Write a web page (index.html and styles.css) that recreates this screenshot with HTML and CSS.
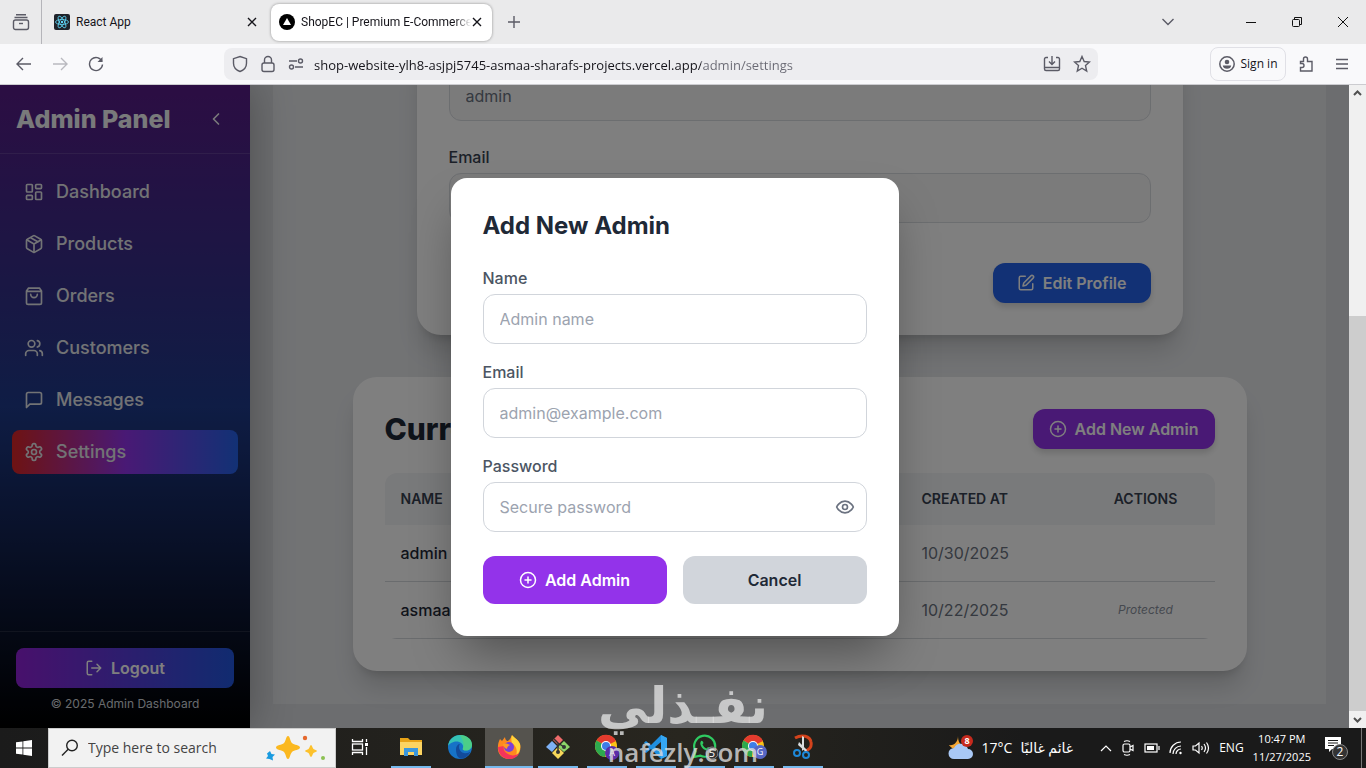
FILE: index.html
```
<!DOCTYPE html>
<html lang="en">
<head>
  <meta charset="UTF-8">
  <meta name="viewport" content="width=device-width, initial-scale=1.0">
  <title>ShopEC | Premium E-Commerce</title>
  <link rel="stylesheet" href="styles.css">
</head>
<body>

  <!-- Tab strip -->
  <header class="tabstrip">
    <button class="tab-list" aria-label="Recent browsing">
      <svg class="line" width="18" height="18" viewBox="0 0 18 18"><path d="M4 1.700h10M2.500 4.500h13"/><rect x="1.500" y="7" width="15" height="9.500" rx="2"/><path d="M7 10.500h4"/></svg>
    </button>
    <div class="tab">
      <svg width="16" height="16" viewBox="0 0 16 16"><rect width="16" height="16" rx="2" fill="#20232a"/><g fill="none" stroke="#61dafb" stroke-width=".8"><ellipse cx="8" cy="8" rx="6.500" ry="2.500"/><ellipse cx="8" cy="8" rx="6.500" ry="2.500" transform="rotate(60 8 8)"/><ellipse cx="8" cy="8" rx="6.500" ry="2.500" transform="rotate(120 8 8)"/></g><circle cx="8" cy="8" r="1.200" fill="#61dafb"/></svg>
      <span class="tab-title">React App</span>
      <button class="tab-close" aria-label="Close tab"><svg class="line dark" width="10" height="10" viewBox="0 0 10 10"><path d="M1 1l8 8M9 1l-8 8"/></svg></button>
    </div>
    <div class="tab tab-active">
      <svg width="16" height="16" viewBox="0 0 16 16"><circle cx="8" cy="8" r="8" fill="#000"/><path d="M8 4l4 7H4z" fill="#fff"/></svg>
      <span class="tab-title">ShopEC | Premium E-Commerce</span>
      <button class="tab-close" aria-label="Close tab"><svg class="line dark" width="10" height="10" viewBox="0 0 10 10"><path d="M1 1l8 8M9 1l-8 8"/></svg></button>
    </div>
    <button class="tab-new" aria-label="New tab"><svg class="line" width="12" height="12" viewBox="0 0 12 12"><path d="M6 0v12M0 6h12"/></svg></button>
    <div class="window-controls">
      <button class="all-tabs" aria-label="List all tabs"><svg class="line" width="12" height="8" viewBox="0 0 12 8"><path d="M.5 1L6 6.500 11.500 1"/></svg></button>
      <button aria-label="Minimize"><svg class="thin" width="10" height="10" viewBox="0 0 10 10"><path d="M0 5.500h10"/></svg></button>
      <button aria-label="Restore"><svg class="thin" width="10" height="10" viewBox="0 0 10 10"><rect x=".5" y="2.500" width="7" height="7" rx="1"/><path d="M2.500 2.500v-2h7v7h-2"/></svg></button>
      <button aria-label="Close"><svg class="thin" width="10" height="10" viewBox="0 0 10 10"><path d="M0 0l10 10M10 0L0 10"/></svg></button>
    </div>
  </header>

  <!-- Navigation toolbar -->
  <nav class="toolbar">
    <button aria-label="Back"><svg class="line" width="16" height="16" viewBox="0 0 16 16"><path d="M15 8H1.500M7 2L1 8l6 6"/></svg></button>
    <button class="disabled" aria-label="Forward"><svg class="line" width="16" height="16" viewBox="0 0 16 16"><path d="M1 8h13.500M9 2l6 6-6 6"/></svg></button>
    <button aria-label="Reload"><svg class="line" width="16" height="16" viewBox="0 0 16 16"><path d="M14 5.500A6.500 6.500 0 1 0 14.500 8.500"/><path d="M14.500 1v5H9.500z" fill="#5b5b66" stroke="none"/></svg></button>
    <div class="urlbar">
      <svg class="line" width="16" height="18" viewBox="0 0 16 18"><path d="M8 1.500l6.500 2.200v4.500c0 4-3 7-6.500 8.300-3.500-1.300-6.500-4.300-6.500-8.300V3.700z"/></svg>
      <svg class="line" width="16" height="18" viewBox="0 0 16 18"><rect x="2" y="8" width="12" height="8.500" rx="2"/><path d="M4.500 8V5a3.500 3.500 0 0 1 7 0v3"/></svg>
      <svg class="line" width="16" height="14" viewBox="0 0 16 14"><path d="M1 4h8M7 10h8"/><circle cx="12.500" cy="4" r="2"/><circle cx="3.500" cy="10" r="2"/></svg>
      <input class="url" type="text" aria-label="Address" value="shop-website-ylh8-asjpj5745-asmaa-sharafs-projects.vercel.app/admin/settings">
      <svg class="line" width="18" height="16" viewBox="0 0 18 16"><path d="M5 1.500H3a1.500 1.500 0 0 0-1.500 1.500v10A1.500 1.500 0 0 0 3 14.500h12a1.500 1.500 0 0 0 1.500-1.500V3A1.500 1.500 0 0 0 15 1.500h-2M1.500 11.500h15M9 0v8M6 5.500l3 3 3-3"/></svg>
      <svg class="line" width="18" height="18" viewBox="0 0 18 18"><path d="M9 1.500l2.200 5 5.300.5-4 3.600 1.200 5.400L9 13.200 4.300 16l1.200-5.400L1.500 7l5.300-.5z"/></svg>
    </div>
    <button class="signin"><svg width="16" height="16" viewBox="0 0 16 16"><circle cx="8" cy="8" r="7.200" fill="none" stroke="#5b5b66" stroke-width="1.500"/><circle cx="8" cy="6" r="2.300" fill="#5b5b66"/><path d="M3.800 9.500h8.400c0 2-2 3.300-4.200 3.300S3.800 11.500 3.800 9.500z" fill="#5b5b66"/></svg>Sign in</button>
    <button aria-label="Extensions"><svg class="line" width="16" height="18" viewBox="0 0 16 18"><path d="M2.500 6.500h3V4a2 2 0 0 1 4 0v2.500h4.500V16H2.500v-3.500H4a2 2 0 0 0 0-4H2.500z"/></svg></button>
    <button aria-label="Menu"><svg class="line" width="12" height="12" viewBox="0 0 12 12"><path d="M0 1.500h12M0 6h12M0 10.500h12"/></svg></button>
  </nav>

  <div class="viewport">
    <div class="page">

      <!-- Sidebar -->
      <aside class="sidebar">
        <div class="sidebar-head">
          <h1>Admin Panel</h1>
          <button aria-label="Collapse"><svg class="icon" width="20" height="20" viewBox="0 0 24 24"><path d="M15 18l-6-6 6-6"/></svg></button>
        </div>
        <nav class="menu">
          <a href="#"><svg class="icon" width="20" height="20" viewBox="0 0 24 24"><rect x="3" y="3" width="7" height="9" rx="1"/><rect x="14" y="3" width="7" height="5" rx="1"/><rect x="14" y="12" width="7" height="9" rx="1"/><rect x="3" y="16" width="7" height="5" rx="1"/></svg>Dashboard</a>
          <a href="#"><svg class="icon" width="20" height="20" viewBox="0 0 24 24"><path d="M16.500 9.400l-9-5.190M21 16V8a2 2 0 0 0-1-1.730l-7-4a2 2 0 0 0-2 0l-7 4A2 2 0 0 0 3 8v8a2 2 0 0 0 1 1.730l7 4a2 2 0 0 0 2 0l7-4A2 2 0 0 0 21 16z"/><path d="M3.270 6.960L12 12.010l8.730-5.050M12 22.080V12"/></svg>Products</a>
          <a href="#"><svg class="icon" width="20" height="20" viewBox="0 0 24 24"><path d="M5.500 2.500h13L21 6v14a2 2 0 0 1-2 2H5a2 2 0 0 1-2-2V6zM3 6.500h18M16 10a4 4 0 0 1-8 0"/></svg>Orders</a>
          <a href="#"><svg class="icon" width="20" height="20" viewBox="0 0 24 24"><path d="M16 21v-2a4 4 0 0 0-4-4H6a4 4 0 0 0-4 4v2"/><circle cx="9" cy="7" r="4"/><path d="M22 21v-2a4 4 0 0 0-3-3.870M16 3.130a4 4 0 0 1 0 7.750"/></svg>Customers</a>
          <a href="#"><svg class="icon" width="20" height="20" viewBox="0 0 24 24"><path d="M21 15a2 2 0 0 1-2 2H7l-4 4V5a2 2 0 0 1 2-2h14a2 2 0 0 1 2 2z"/></svg>Messages</a>
          <a href="#" class="active"><svg class="icon" width="20" height="20" viewBox="0 0 24 24"><path d="M12.220 2h-.44a2 2 0 0 0-2 2v.18a2 2 0 0 1-1 1.730l-.43.25a2 2 0 0 1-2 0l-.15-.08a2 2 0 0 0-2.730.73l-.22.38a2 2 0 0 0 .73 2.730l.15.1a2 2 0 0 1 1 1.720v.51a2 2 0 0 1-1 1.740l-.15.09a2 2 0 0 0-.73 2.730l.22.38a2 2 0 0 0 2.730.73l.15-.08a2 2 0 0 1 2 0l.43.25a2 2 0 0 1 1 1.730V20a2 2 0 0 0 2 2h.44a2 2 0 0 0 2-2v-.18a2 2 0 0 1 1-1.730l.43-.25a2 2 0 0 1 2 0l.15.08a2 2 0 0 0 2.730-.73l.22-.39a2 2 0 0 0-.73-2.730l-.15-.08a2 2 0 0 1-1-1.740v-.5a2 2 0 0 1 1-1.740l.15-.09a2 2 0 0 0 .73-2.730l-.22-.38a2 2 0 0 0-2.730-.73l-.15.08a2 2 0 0 1-2 0l-.43-.25a2 2 0 0 1-1-1.730V4a2 2 0 0 0-2-2z"/><circle cx="12" cy="12" r="3"/></svg>Settings</a>
        </nav>
        <div class="sidebar-foot">
          <button class="btn logout"><svg class="icon" width="18" height="18" viewBox="0 0 24 24"><path d="M9 21H5a2 2 0 0 1-2-2V5a2 2 0 0 1 2-2h4M16 17l5-5-5-5M21 12H9"/></svg>Logout</button>
          <p>© 2025 Admin Dashboard</p>
        </div>
      </aside>

      <!-- Settings page, scrolled to its end -->
      <main class="content">
        <div class="panel">
          <section class="card profile">
            <input type="text" aria-label="Name" value="admin" disabled>
            <label for="profile-email">Email</label>
            <input id="profile-email" type="email" disabled>
            <button class="btn edit"><svg class="icon" width="18" height="18" viewBox="0 0 24 24"><path d="M11 3H5a2 2 0 0 0-2 2v14a2 2 0 0 0 2 2h14a2 2 0 0 0 2-2v-6"/><path d="M18.500 2.500a2.120 2.120 0 0 1 3 3L12 15l-4 1 1-4z"/></svg>Edit Profile</button>
          </section>

          <section class="card admins">
            <div class="card-head">
              <h2>Current Admins</h2>
              <button class="btn add-new"><svg class="icon" width="18" height="18" viewBox="0 0 24 24"><circle cx="12" cy="12" r="10"/><path d="M12 8v8M8 12h8"/></svg>Add New Admin</button>
            </div>
            <div class="table-wrap">
              <table>
                <thead>
                  <tr><th class="col-name">Name</th><th>Email</th><th class="col-date">Created at</th><th class="col-actions">Actions</th></tr>
                </thead>
                <tbody>
                  <tr><td class="name">admin</td><td></td><td>10/30/2025</td><td></td></tr>
                  <tr><td class="name">asmaa</td><td></td><td>10/22/2025</td><td class="protected">Protected</td></tr>
                </tbody>
              </table>
            </div>
          </section>
        </div>
      </main>

      <!-- Add admin dialog -->
      <div class="overlay">
        <form class="modal">
          <h2>Add New Admin</h2>
          <div class="field">
            <label for="name">Name</label>
            <input id="name" type="text" placeholder="Admin name">
          </div>
          <div class="field">
            <label for="email">Email</label>
            <input id="email" type="email" placeholder="admin@example.com">
          </div>
          <div class="field">
            <label for="password">Password</label>
            <input id="password" type="password" placeholder="Secure password">
            <button class="reveal" type="button" aria-label="Show password"><svg class="icon" width="20" height="20" viewBox="0 0 24 24"><path d="M2 12s3-7 10-7 10 7 10 7-3 7-10 7-10-7-10-7z"/><circle cx="12" cy="12" r="3"/></svg></button>
          </div>
          <div class="modal-actions">
            <button class="btn save" type="button"><svg class="icon" width="18" height="18" viewBox="0 0 24 24"><circle cx="12" cy="12" r="10"/><path d="M12 8v8M8 12h8"/></svg>Add Admin</button>
            <button class="btn cancel" type="button">Cancel</button>
          </div>
        </form>
      </div>
    </div>

    <div class="scrollbar">
      <svg width="17" height="17" viewBox="0 0 17 17"><path d="M5 10l3.500-3.500L12 10" fill="none" stroke="#505050" stroke-width="2"/></svg>
      <div class="thumb"></div>
      <svg width="17" height="17" viewBox="0 0 17 17"><path d="M5 7l3.500 3.500L12 7" fill="none" stroke="#505050" stroke-width="2"/></svg>
    </div>
  </div>

  <!-- Taskbar -->
  <footer class="taskbar">
    <button class="start" aria-label="Start"><svg width="16" height="16" viewBox="0 0 16 16" fill="#fff"><path d="M0 2.300l6.500-.9v6.200H0zM7.300 1.300L16 0v7.600H7.300zM0 8.400h6.500v6.200L0 13.700zM7.300 8.400H16V16l-8.700-1.300z"/></svg></button>
    <div class="search">
      <svg width="18" height="18" viewBox="0 0 18 18" fill="none" stroke="#222" stroke-width="1.400"><circle cx="11" cy="6.500" r="5.300"/><path d="M7.200 10.300L1 16.500"/></svg>
      <input type="text" aria-label="Search" placeholder="Type here to search">
      <svg width="62" height="28" viewBox="0 0 62 28"><path d="M23 2c2 0 2 5 4 7s8 2 8 4.500-6 2.500-8 4.500-2 7-4 7-2-5-4-7-8-2-8-4.500 6-2.500 8-4.500 2-7 4-7z" fill="#fbb81f"/><path d="M46 11c1 0 1.500 3 2.500 4s3.500 1 3.500 2-2.500 1-3.500 2-1.500 4-2.500 4-1.500-3-2.500-4-3.500-1-3.500-2 2.500-1 3.500-2 1.500-4 2.500-4z" fill="#fcc12c"/><path d="M5 17l1.500 3 3.500.5-2.500 2.500.5 3.500L4.500 25 1 24.500 3 22l-1-2.500z" fill="#1a9be0"/><circle cx="40" cy="4" r="2.200" fill="#e5682d"/><circle cx="58" cy="24" r="2" fill="#8cc152"/></svg>
    </div>
    <button class="task" aria-label="Task view"><svg width="18" height="16" viewBox="0 0 18 16" fill="none" stroke="#fff" stroke-width="1.300"><path d="M1.500 0v2.500h10V0M1.500 16v-2.500h10V16M15.500 0v3M15.500 8v8"/><rect x="1.500" y="5" width="10" height="6"/><path d="M14 5.500h3" stroke-width="3"/></svg></button>
    <div class="apps">
      <button class="task open" aria-label="File Explorer"><svg width="24" height="24" viewBox="0 0 24 24"><path d="M1 3h8l2 2h12v5H1z" fill="#e8a317"/><path d="M1 7h22v13H1z" fill="#fcd462"/><path d="M5 21v-8h14v8h-4v-4H9v4z" fill="#3b97dd"/></svg></button>
      <button class="task" aria-label="Edge"><svg width="24" height="24" viewBox="0 0 24 24"><circle cx="12" cy="12" r="12" fill="#1673c7"/><path d="M0 11C1 4 6 0 12 0c7 0 12 4.500 12 9.500 0 4-3 6-6 6-2 0-4-.5-3-2.500C16 9 12 6.500 8.500 6.500 4.500 6.500 1 9 0 11z" fill="#35c3b5"/><path d="M12 0c7 0 12 4.500 12 9.500 0 4-3 6-6 6-2 0-4-.5-3-2.500 2-4-1-9-3-13z" fill="#5bd66b" opacity=".6"/><path d="M8 14c0-3 2-5 4-5-2 2-1 8 4 9 3 .6 5-.5 6.500-1.500C20 22 15 24 12 23.500 9 22 8 18 8 14z" fill="#124b9b"/></svg></button>
      <button class="task open current" aria-label="Firefox"><svg width="24" height="24" viewBox="0 0 24 24"><path d="M15 0c1 2 6 4 8 9 2 8-3 15-11 15S0 18 1 11c0-3 1-5 2-7l2 2 3-4c0 2 1 3 2 4 2 0 4-3 5-6z" fill="#ff8a1e"/><path d="M15 0c1 2 6 4 8 9 1 5-1 9-4 12 2-6 0-10-4-13-1-3-1-6 0-8z" fill="#ffd43a"/><path d="M1 12c0 7 5 12 11 12 5 0 8-2 10-6-3 3-8 3-11 1-4-2-5-5-4-8z" fill="#f5345b"/><circle cx="12" cy="12" r="5" fill="#7a40d8"/><path d="M6 9c3-1 5 0 7 1-2 1-3 2-3 4-2-1-4-2-4-5z" fill="#ff9a22"/></svg></button>
      <button class="task open" aria-label="Git Bash"><svg width="26" height="26" viewBox="0 0 26 26"><path d="M13 1l5 5-5 5-5-5z" fill="#ef6b6b"/><path d="M7 7l5 5-5 6-6-5z" fill="#7eb1f5"/><path d="M19 7l6 6-6 5-6-5z" fill="#8cd46a"/><path d="M13 13l6 6-6 6-6-6z" fill="#f7d85a"/><path d="M9 5l4 4v9M13 9l6 4" fill="none" stroke="#333" stroke-width="1.500"/><circle cx="13" cy="18" r="2" fill="#333"/><circle cx="19" cy="13" r="2" fill="#333"/></svg></button>
      <button class="task open" aria-label="Chrome"><svg width="26" height="26" viewBox="0 0 26 26"><circle cx="12" cy="12" r="11" fill="#fbc116"/><path d="M12 12L2.500 6.500A11 11 0 0 1 22 7z" fill="#e33b2e"/><path d="M12 12L2.500 6.500A11 11 0 0 0 11 23z" fill="#2da94f"/><circle cx="12" cy="12" r="5" fill="#fff"/><circle cx="12" cy="12" r="4" fill="#3f7de8"/><circle cx="18" cy="19" r="7" fill="#5a2ca8"/><text x="18" y="22" font-size="9" font-family="Open Sans, sans-serif" text-anchor="middle" fill="#fff">A</text></svg></button>
      <button class="task open" aria-label="Visual Studio Code"><svg width="24" height="24" viewBox="0 0 24 24"><path d="M17 0l6 3v18l-6 3L7 14l-5 4-2-1.500L5 12 0 7.500 2 6l5 4zm0 7l-6 5 6 5z" fill="#1f8fe0"/><path d="M17 0l6 3v18l-6 3z" fill="#35a6f2"/></svg></button>
      <button class="task open" aria-label="WhatsApp"><svg width="26" height="26" viewBox="0 0 26 26"><path d="M2 23l1.600-5.500A10.500 10.500 0 1 1 8 21.600z" fill="none" stroke="#2fcb62" stroke-width="2.200"/><path d="M8.500 8c1-2 2-1.500 3 1l-1 1.500c1 2 2 3 4 4l1.500-1.500c3 1 3 2 1 3.500C13 18 7 12 8.500 8z" fill="#2fcb62"/><circle cx="20" cy="19" r="6" fill="#333" stroke="#888"/><text x="20" y="23" font-size="11" font-family="Open Sans, sans-serif" text-anchor="middle" fill="#fff">5</text></svg></button>
      <button class="task open" aria-label="Chrome"><svg width="26" height="26" viewBox="0 0 26 26"><circle cx="12" cy="12" r="11" fill="#fbc116"/><path d="M12 12L2.500 6.500A11 11 0 0 1 22 7z" fill="#e33b2e"/><path d="M12 12L2.500 6.500A11 11 0 0 0 11 23z" fill="#2da94f"/><circle cx="12" cy="12" r="5" fill="#fff"/><circle cx="12" cy="12" r="4" fill="#3f7de8"/><circle cx="19" cy="18" r="7" fill="#5767c4"/><text x="19" y="21" font-size="9" font-family="Open Sans, sans-serif" text-anchor="middle" fill="#fff">G</text></svg></button>
      <button class="task open" aria-label="Snipping Tool"><svg width="22" height="26" viewBox="0 0 22 26"><path d="M3 4c7-4 15-2 16 4 1 5-2 8-6 9" fill="none" stroke="#d4431c" stroke-width="3"/><path d="M10 2l2 1v12l-2 2zM7 8l8 8-1 2-8-7z" fill="#d9dde0"/><circle cx="5" cy="19" r="3" fill="none" stroke="#1e88d8" stroke-width="2"/><circle cx="14" cy="21" r="3" fill="none" stroke="#1e88d8" stroke-width="2"/></svg></button>
    </div>
    <div class="tray">
      <div class="weather">
        <svg width="26" height="26" viewBox="0 0 26 26"><path d="M10 1c0 6 2 9 7 10-5 5-13 4-16-1 5 1 9-3 9-9z" fill="#f5a732"/><path d="M6 24a5.500 5.500 0 0 1 0-11 7.500 7.500 0 0 1 14 1 5 5 0 0 1 0 10z" fill="#a9c8f5"/><circle cx="19" cy="6" r="6" fill="#c62a1d"/><text x="19" y="9" font-size="9" font-family="Open Sans, sans-serif" font-weight="700" text-anchor="middle" fill="#fff">8</text></svg>
        <span>17°C</span>
        <span lang="ar" dir="rtl">غائم غالبًا</span>
      </div>
      <svg width="12" height="8" viewBox="0 0 12 8"><path d="M1 7l5-5 5 5"/></svg>
      <svg width="14" height="16" viewBox="0 0 14 16"><rect x="2" y="4" width="7" height="8" rx="1.500"/><path d="M9 7l3-1.500v5L9 9M3 1.500q3-1.500 6 0M3 14.500q3 1.500 6 0"/></svg>
      <svg width="16" height="10" viewBox="0 0 16 10"><rect x="1" y="1" width="12" height="8"/><path d="M15 3v4"/><path d="M3 3h7v4H3z" fill="#fff" stroke="none"/></svg>
      <svg width="14" height="14" viewBox="0 0 14 14"><path d="M1 12A11 11 0 0 1 12 1M4 13a8 8 0 0 1 8-8M7 13a5 5 0 0 1 5-5"/><circle cx="11.500" cy="12" r="1.200" fill="#fff" stroke="none"/></svg>
      <svg width="18" height="14" viewBox="0 0 18 14"><path d="M1 5h2.500L7 2v10L3.500 9H1zM9.500 5q1.500 2 0 4M12 3q3 4 0 8M14.500 1.500q4 5.500 0 11"/></svg>
      <span>ENG</span>
      <div class="clock"><span>10:47 PM</span><span>11/27/2025</span></div>
      <button class="notify" aria-label="Notifications"><svg width="26" height="26" viewBox="0 0 26 26"><path d="M1 2h16v12H8l-3 3v-3H1z" fill="#fff"/><path d="M4 5.500h10M4 8h10M4 10.500h6" stroke="#1b1b1b"/><circle cx="16" cy="17" r="7.500" fill="#333" stroke="#888"/><text x="16" y="21" font-size="12" font-family="Open Sans, sans-serif" text-anchor="middle" fill="#fff">2</text></svg></button>
    </div>
  </footer>

  <!-- Floating watermark -->
  <div class="watermark">
    <span lang="ar" dir="rtl">نفـذلي</span>
    <span class="domain">nafezly.com</span>
  </div>

</body>
</html>
```
FILE: styles.css
```
* {
  box-sizing: border-box;
}

body {
  margin: 0;
  height: 100vh;
  display: flex;
  flex-direction: column;
  overflow: hidden;
  font-family: 'Inter', sans-serif;
  font-size: 16px;
  line-height: 24px;
}

h1, h2, p {
  margin: 0;
}

button {
  display: flex;
  align-items: center;
  justify-content: center;
  padding: 0;
  border: 0;
  background: none;
  color: inherit;
  font: inherit;
}

input {
  font: inherit;
  outline: 0;
}

svg {
  flex: none;
}

.line {
  fill: none;
  stroke: #5b5b66;
  stroke-width: 1.4;
}

.dark {
  stroke: #15141a;
}

.thin {
  fill: none;
  stroke: #111;
  stroke-width: 1;
}

.icon {
  fill: none;
  stroke: currentColor;
  stroke-width: 2;
  stroke-linecap: round;
  stroke-linejoin: round;
}

/* browser */

.tabstrip, .toolbar {
  font-family: 'Open Sans', sans-serif;
  font-size: 12px;
  color: #15141a;
}

.tabstrip {
  flex: none;
  display: flex;
  align-items: center;
  gap: 4px;
  height: 44px;
  background: #eaeaeb;
}

.tab-list {
  width: 42px;
  height: 44px;
  border-right: 1px solid #b5b5ba;
}

.tab {
  display: flex;
  align-items: center;
  width: 221px;
  height: 37px;
  padding: 0 9px 0 8px;
  border-radius: 8px;
}

.tab-active {
  background: #fff;
  box-shadow: 0 0 3px rgba(0, 0, 0, .4);
}

.tab-title {
  flex: 1;
  margin-left: 6px;
  overflow: hidden;
  white-space: nowrap;
  font-family: 'Roboto', sans-serif;
}

.tab-active .tab-title {
  -webkit-mask-image: linear-gradient(to left, transparent, #000 16px);
  mask-image: linear-gradient(to left, transparent, #000 16px);
}

.tab-close {
  width: 12px;
  height: 16px;
}

.tab-new {
  width: 36px;
  height: 36px;
}

.window-controls {
  display: flex;
  margin-left: auto;
}

.window-controls button {
  width: 46px;
  height: 44px;
}

.window-controls .all-tabs {
  width: 32px;
  margin-right: 44px;
}

.toolbar {
  flex: none;
  display: flex;
  align-items: center;
  gap: 4px;
  height: 41px;
  padding: 0 8px;
  background: #f9f9fb;
  border-bottom: 1px solid #ccccd0;
}

.toolbar button {
  width: 32px;
  height: 32px;
}

.toolbar .disabled {
  opacity: .4;
}

.urlbar {
  flex: 1;
  display: flex;
  align-items: center;
  gap: 12px;
  height: 32px;
  margin: 0 108px;
  padding: 0 7px 0 8px;
  border-radius: 8px;
  background: #ededf0;
}

.url {
  flex: 1;
  min-width: 0;
  margin-left: -2px;
  padding: 2px 0 0;
  border: 0;
  font-size: 13px;
  color: transparent;
  background: linear-gradient(to right, #15141a 387px, #6a6a74 387px);
  -webkit-background-clip: text;
  background-clip: text;
}

.toolbar .signin {
  width: 76px;
  height: 34px;
  gap: 6px;
  border: 1px solid #e0e0e6;
  border-radius: 8px;
  white-space: nowrap;
}

/* page */

.viewport {
  flex: 1;
  min-height: 0;
  display: flex;
}

.page {
  position: relative;
  flex: 1;
  display: flex;
  overflow: hidden;
}

.scrollbar {
  display: flex;
  flex-direction: column;
  width: 17px;
  background: #f0f0f0;
}

.thumb {
  flex: 1;
  margin-top: 214px;
  background: #cdcdcd;
}

.sidebar {
  z-index: 1;
  display: flex;
  flex-direction: column;
  width: 250px;
  color: #f3f4f6;
  background: linear-gradient(#581c87, #1e3a8a, #000);
  box-shadow: 0 0 40px rgba(0, 0, 0, .3);
}

.sidebar-head {
  display: flex;
  align-items: center;
  justify-content: space-between;
  padding: 16px;
  border-bottom: 1px solid rgba(255, 255, 255, .12);
}

.sidebar-head h1 {
  font-size: 25px;
  font-weight: 800;
  line-height: 32px;
}

.sidebar-head button {
  width: 36px;
  height: 36px;
}

.menu {
  flex: 1;
  display: flex;
  flex-direction: column;
  gap: 8px;
  padding: 16px 12px;
}

.menu a {
  display: flex;
  align-items: center;
  gap: 12px;
  height: 44px;
  padding: 0 12px;
  border-radius: 8px;
  color: #e5e7eb;
  font-size: 18px;
  font-weight: 500;
  line-height: 28px;
  text-decoration: none;
}

.menu .active {
  background: linear-gradient(to right, #dc2626, #9333ea, #2563eb);
}

.sidebar-foot {
  padding: 16px;
  border-top: 1px solid rgba(255, 255, 255, .1);
}

.sidebar-foot p {
  margin-top: 8px;
  font-size: 12px;
  line-height: 16px;
  text-align: center;
  color: #d1d5db;
}

.btn {
  gap: 8px;
  height: 40px;
  border-radius: 12px;
  color: #fff;
  font-weight: 600;
}

.logout {
  width: 100%;
  border-radius: 8px;
  background: linear-gradient(to right, #9021d8, #2257e0);
}

.content {
  flex: 1;
  display: flex;
  flex-direction: column;
  justify-content: flex-end;
  padding: 0 23px 24px;
  background: #d8dade;
}

.panel {
  display: flex;
  flex-direction: column;
  align-items: center;
  gap: 42px;
  padding: 0 32px 33px;
  background: #e4e6e9;
}

.card {
  width: 100%;
  padding: 32px;
  border-radius: 24px;
  background: #fff;
  box-shadow: 0 20px 25px -5px rgba(0, 0, 0, .15), 0 8px 10px -6px rgba(0, 0, 0, .15);
}

.profile {
  display: flex;
  flex-direction: column;
  max-width: 766px;
}

.profile input {
  height: 50px;
  padding: 0 16px;
  border: 1px solid #d9dce1;
  border-radius: 12px;
  background: #f6f6f7;
  color: #6b7280;
}

.profile label {
  margin: 24px 0 4px;
  color: #374151;
  font-weight: 500;
}

.edit {
  align-self: flex-end;
  margin-top: 40px;
  padding: 0 24px;
  background: #2563eb;
  box-shadow: 0 4px 6px rgba(0, 0, 0, .15);
}

.admins {
  max-width: 894px;
}

.card-head {
  display: flex;
  align-items: center;
  justify-content: space-between;
  margin-bottom: 24px;
}

.card-head h2 {
  font-size: 30px;
  font-weight: 800;
  line-height: 36px;
  color: #1f2937;
}

.add-new {
  padding: 0 16px;
  background: #9333ea;
  box-shadow: 0 4px 6px rgba(0, 0, 0, .15);
}

.table-wrap {
  overflow: hidden;
  border-radius: 12px;
}

table {
  width: 100%;
  table-layout: fixed;
  border-spacing: 0;
}

th {
  padding: 16px;
  background: #f3f4f6;
  color: #374151;
  font-size: 14px;
  font-weight: 600;
  line-height: 20px;
  text-align: left;
  text-transform: uppercase;
}

td {
  height: 57px;
  padding: 0 16px;
  border-bottom: 1px solid #d5d8dd;
  color: #6b7280;
}

.col-name {
  width: 200px;
}

.col-date {
  width: 171px;
}

.col-actions {
  width: 138px;
  text-align: center;
}

.name {
  color: #1f2937;
  font-weight: 500;
}

.protected {
  color: #8b929e;
  font-size: 12px;
  font-style: italic;
  text-align: center;
}

/* dialog */

.overlay {
  position: absolute;
  inset: 0;
  z-index: 2;
  display: flex;
  align-items: center;
  justify-content: center;
  background: rgba(0, 0, 0, .5);
}

.modal {
  width: 448px;
  padding: 32px;
  border-radius: 16px;
  background: #fff;
  box-shadow: 0 25px 50px -12px rgba(0, 0, 0, .4);
}

.modal h2 {
  margin-bottom: 24px;
  color: #1f2937;
  font-size: 24px;
  line-height: 32px;
}

.field {
  position: relative;
  margin-bottom: 16px;
}

.field label {
  display: block;
  margin-bottom: 4px;
  color: #4b5563;
  font-weight: 500;
}

.field input {
  display: block;
  width: 100%;
  height: 50px;
  padding: 0 16px;
  border: 1px solid #d1d5db;
  border-radius: 12px;
}

.field input::placeholder {
  color: #9ca3af;
}

.reveal {
  position: absolute;
  right: 12px;
  bottom: 15px;
  color: #6b7280;
}

.modal-actions {
  display: flex;
  gap: 16px;
  margin-top: 24px;
}

.modal-actions .btn {
  flex: 1;
  height: 48px;
}

.save {
  background: #9333ea;
}

.modal-actions .cancel {
  background: #d1d5db;
  color: #1f2937;
}

/* taskbar */

.taskbar {
  flex: none;
  display: flex;
  height: 40px;
  background: linear-gradient(to right, #1b1b1b, #28261f 50%, #1a1a1a 75%);
  color: #fff;
  font-family: 'Open Sans', 'DejaVu Sans', sans-serif;
  font-size: 12px;
}

.start {
  width: 48px;
}

.search {
  display: flex;
  align-items: center;
  gap: 9px;
  width: 288px;
  padding: 0 8px 0 12px;
  border: 1px solid #ccc;
  background: #f2f2f2;
}

.search input {
  flex: 1;
  min-width: 0;
  padding: 0;
  border: 0;
  background: none;
  font-size: 14px;
}

.search input::placeholder {
  color: #444;
}

.task {
  width: 48px;
  height: 40px;
  border-bottom: 2px solid transparent;
}

.apps {
  display: flex;
  gap: 1px;
  margin-left: 3px;
}

.open {
  background: linear-gradient(#76b9ed, #76b9ed) center bottom / 40px 2px no-repeat border-box;
}

.current {
  background-color: #55534e;
  background-size: 48px 2px;
}

.tray {
  display: flex;
  align-items: center;
  gap: 9px;
  margin-left: auto;
  padding-right: 4px;
}

.tray > svg {
  fill: none;
  stroke: #fff;
  stroke-width: 1.2;
}

.weather {
  display: flex;
  align-items: center;
  gap: 8px;
  margin-right: 18px;
  font-size: 14px;
}

.clock {
  display: flex;
  flex-direction: column;
  align-items: center;
  padding-right: 4px;
  font-size: 11px;
  line-height: 18px;
}

.notify {
  justify-content: flex-start;
  width: 38px;
  height: 40px;
  border-right: 1px solid #777;
}

.watermark {
  position: absolute;
  left: 50%;
  bottom: 0;
  z-index: 3;
  display: flex;
  flex-direction: column;
  align-items: center;
  color: rgba(222, 222, 222, .8);
  transform: translateX(-50%);
  font-family: 'DejaVu Sans', sans-serif;
  font-size: 50px;
  font-weight: 700;
  line-height: 60px;
  pointer-events: none;
}

.domain {
  font-family: 'Open Sans', sans-serif;
  font-size: 26px;
  font-weight: 600;
  line-height: 32px;
}
```
